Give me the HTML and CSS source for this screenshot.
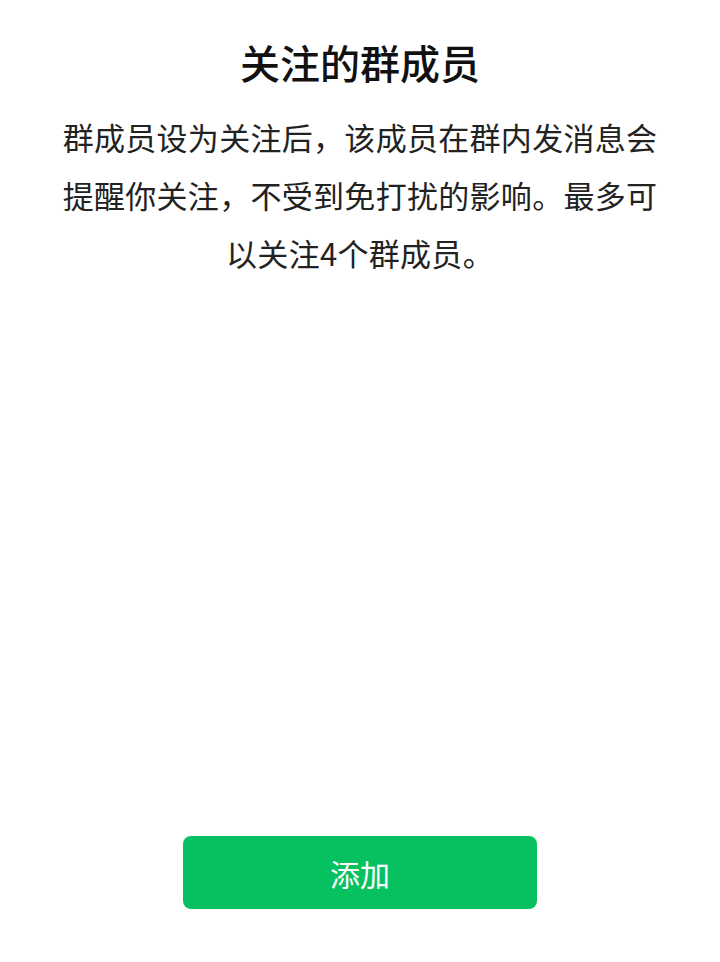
FILE: index.html
```html
<!DOCTYPE html>
<html lang="zh-CN">
<head>
    <meta charset="UTF-8">
    <meta name="viewport" content="width=device-width, initial-scale=1.0">
    <title>关注的群成员</title>
    <link rel="stylesheet" href="styles.css">
</head>
<body>
    <div class="page">
        <div class="intro">
            <h1 class="title">关注的群成员</h1>
            <p class="desc">群成员设为关注后，该成员在群内发消息会提醒你关注，不受到免打扰的影响。最多可以关注4个群成员。</p>
        </div>
        <div class="actions">
            <button class="add-button">添加</button>
        </div>
    </div>
</body>
</html>
```

FILE: styles.css
```css
html, body {
    margin: 0;
    padding: 0;
    background-color: #ffffff;
}
body {
    font-family: "Noto Sans CJK SC", "Noto Sans", sans-serif;
    color: #1a1a1a;
}
.page {
    min-height: 100vh;
    display: flex;
    flex-direction: column;
    box-sizing: border-box;
}
.intro {
    flex: 1;
    padding: 35px 56px 0;
    text-align: center;
}
.title {
    font-size: 40px;
    font-weight: 500;
    line-height: 54px;
    margin: 0 0 19px;
    color: #111111;
}
.desc {
    font-size: 31px;
    line-height: 58px;
    letter-spacing: 0.3px;
    margin: 0;
    color: #222222;
}
.actions {
    display: flex;
    justify-content: center;
    padding-bottom: 53px;
}
.add-button {
    width: 354px;
    height: 73px;
    border: none;
    border-radius: 8px;
    background-color: #07c160;
    color: #ffffff;
    font-family: inherit;
    font-size: 30px;
    font-weight: 400;
    cursor: pointer;
}
```
